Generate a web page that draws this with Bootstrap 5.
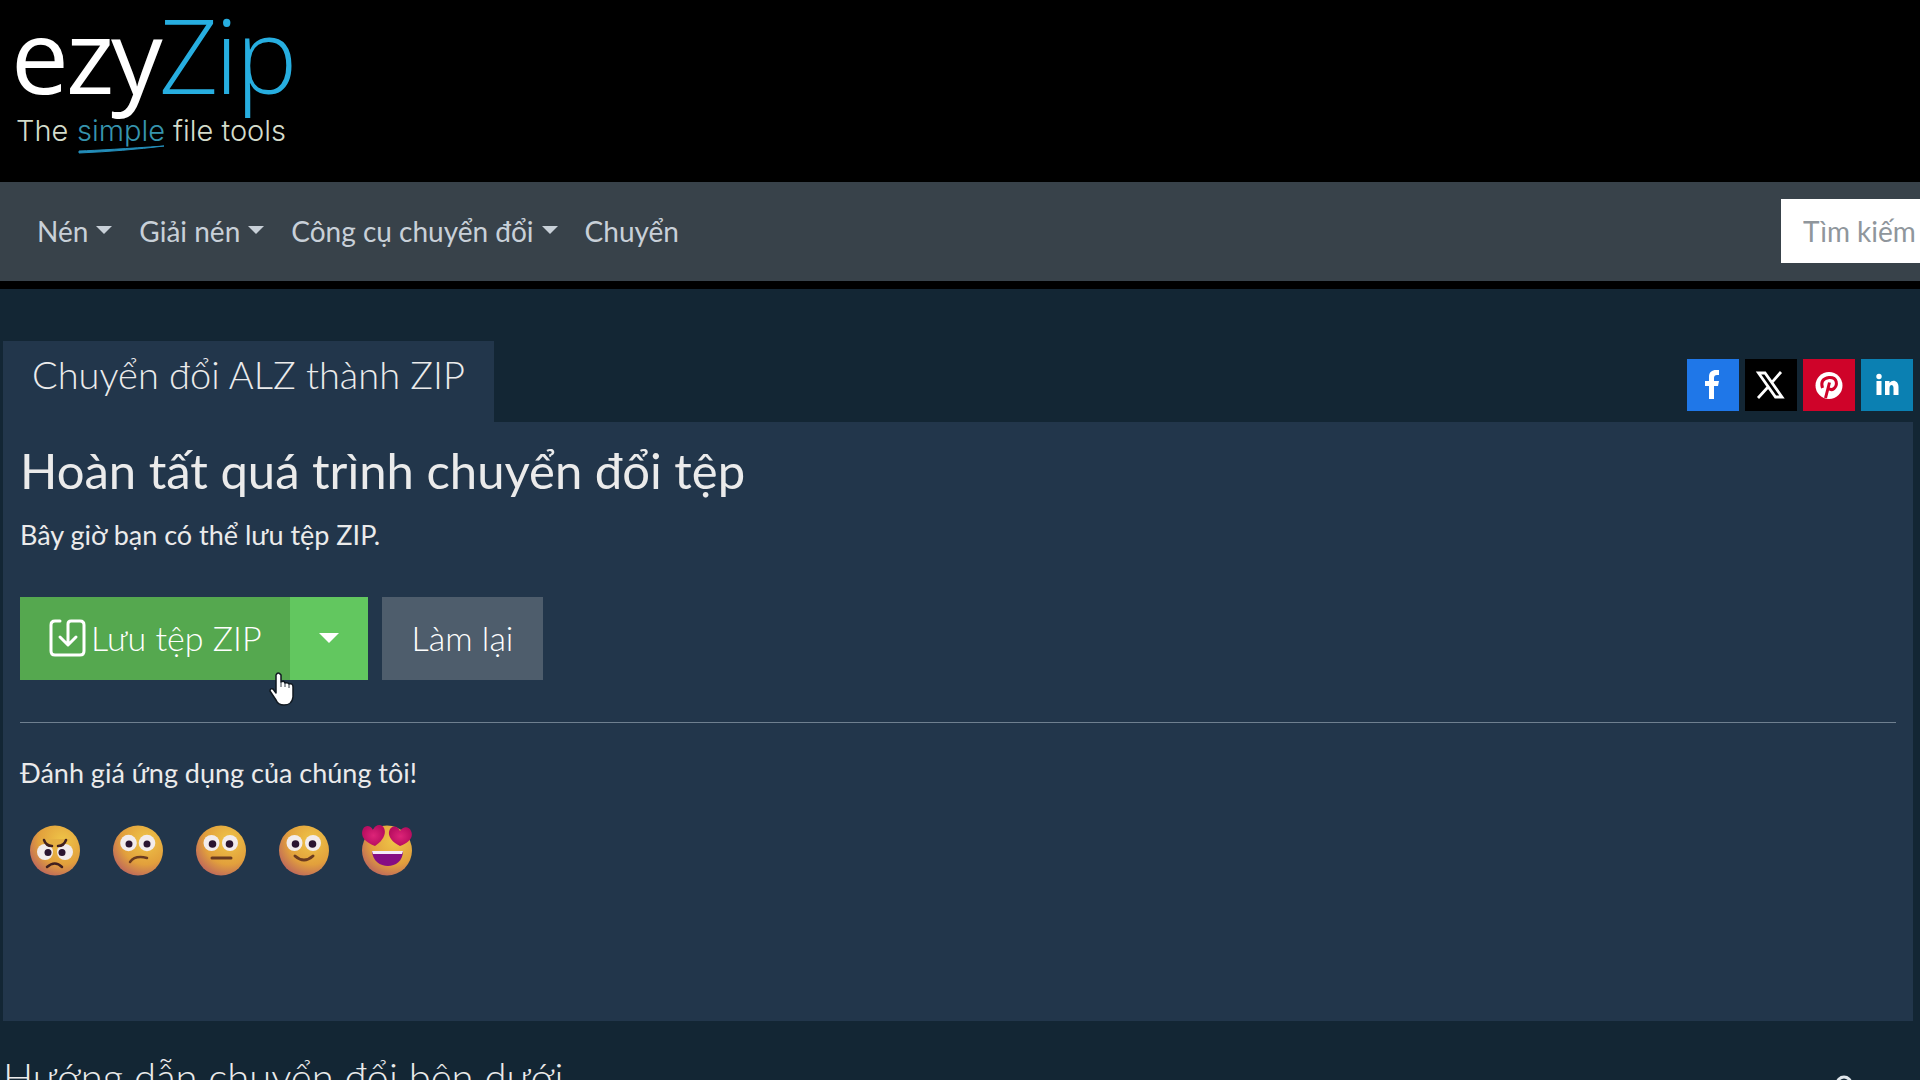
<!DOCTYPE html>
<html lang="vi">
<head>
<meta charset="utf-8">
<meta name="viewport" content="width=device-width, initial-scale=1">
<title>ezyZip</title>
<link href="https://cdn.jsdelivr.net/npm/bootstrap@5.3.0/dist/css/bootstrap.min.css" rel="stylesheet">
<style>
body{background:#132634;color:#ebebeb;font-family:Lato,"Noto Sans",sans-serif;font-size:28px;line-height:40px;height:100vh;overflow:hidden}
.masthead{background:#000;height:182px;padding:0 16px}
.brand{display:inline-block}
.brand svg{display:block}
.wordmark{font-family:"Open Sans","Noto Sans",sans-serif;font-size:103px}
.tagline{font-family:Inter,"Liberation Sans",sans-serif;font-size:29px;font-weight:300}
.mainbar{background:#38424a;border-bottom:8px solid #000;height:107px;padding:0 0 1px 37px}
.mainbar .navbar-nav .nav-link{color:#c8d0d8;padding:0;line-height:40px}
.mainbar .navbar-nav{gap:27px}
.mainbar .dropdown-toggle::after,.save-more::after{vertical-align:8px;border-top:8px solid;border-left:8px solid transparent;border-right:8px solid transparent;margin-left:8px}
.finder{width:139px;height:64px;border:0;border-radius:0;padding:0 0 0 22px;font-size:28px;background:#fff}
.finder::placeholder{color:#8f969c;opacity:1}
.workspace{padding:52px 7px 0 3px}
.tool-tab{background:#22364b;height:81px;padding:11px 29px 0;font-size:38px;font-weight:300;line-height:44px;margin:0}
.share{gap:6px;padding-bottom:11px}
.share a{width:52px;height:52px;display:flex}
.share svg{width:52px;height:52px}
.fb{background:#1f77e8}.xx{background:#000}.pin{background:#cf0329}.lin{background:#0b80b2}
.panel{background:#22364b;min-height:599px;padding:18px 17px}
.panel h2{font-size:49px;font-weight:400;line-height:60px;margin:0 0 15px}
.panel p{margin:0;font-size:27px}
.actions{gap:14px;margin-top:42px}
.actions .btn{border:0;border-radius:0;height:83px;font-size:34px;font-weight:300;line-height:44px;padding:0 30px 2px;color:#fff}
.actions .save{background:#55a84f;padding:0 29px 2px}
.actions .save-more{background:#62c75f;width:78px;padding:0}
.actions .save-more::after{margin:0;border-width:10px 10px 0;vertical-align:9px}
.actions .redo{background:#4e5d6c}
.panel hr{border-color:#6f8090;opacity:1;margin:42px 0 30px;border-top-width:1px}
.faces{gap:33px;margin:32px 0 0 10px}
.faces button{border:0;padding:0;background:none;width:50px;height:51px;display:flex}
.pointer{position:absolute;left:269px;top:671px;width:25px;height:36px}
.guide{padding:28px 64px 0 3px}
.guide h2{font-size:40px;font-weight:300;line-height:56px;margin:0}
.guide svg{margin-top:26px}
</style>
<script src="https://cdn.jsdelivr.net/npm/bootstrap@5.3.0/dist/js/bootstrap.bundle.min.js"></script>
</head>
<body>
<header class="masthead">
<a class="brand" href="#" aria-label="ezyZip">
<svg width="290" height="160" viewBox="0 0 290 160">
<g class="wordmark"><g fill="#fff"><text x="-5" y="94">e</text><text x="50" y="94">z</text><text x="95" y="94">y</text></g>
<g fill="#27aee0" font-weight="300"><text x="143" y="94">Z</text><text x="199" y="94">i</text><text x="220" y="94">p</text></g></g>
<g class="tagline" fill="#d4dccb"><text x="0" y="141">The</text><text x="61" y="141" fill="#3694ae">simple</text><text x="157" y="141">file tools</text></g>
<path d="M63 151q28-1 85-5q-40 5-85 7z" fill="#238db9" stroke="#238db9"/>
</svg></a>
</header>
<nav class="mainbar navbar navbar-expand flex-nowrap">
<ul class="navbar-nav">
<li class="nav-item dropdown"><a class="nav-link dropdown-toggle" href="#" data-bs-toggle="dropdown">Nén</a></li>
<li class="nav-item dropdown"><a class="nav-link dropdown-toggle" href="#" data-bs-toggle="dropdown">Giải nén</a></li>
<li class="nav-item dropdown"><a class="nav-link dropdown-toggle" href="#" data-bs-toggle="dropdown">Công cụ chuyển đổi</a></li>
<li class="nav-item"><a class="nav-link" href="#">Chuyển</a></li>
</ul>
<form class="ms-auto d-flex"><input class="finder form-control" type="text" placeholder="Tìm kiếm" aria-label="Tìm kiếm"></form>
</nav>
<main class="workspace">
<div class="d-flex justify-content-between align-items-end">
<h1 class="tool-tab">Chuyển đổi ALZ thành ZIP</h1>
<div class="share d-flex">
<a class="fb" href="#" aria-label="Facebook"><svg viewBox="0 0 52 52"><path fill="#fff" d="M22 40V27h-4v-5h4v-4c0-5 3-7 7-7h3v5h-2q-3 0-3 3v3h5l-1 5h-4v13z"/></svg></a>
<a class="xx" href="#" aria-label="X"><svg viewBox="0 0 52 52"><path fill="none" stroke="#fff" stroke-width="2.800" d="M13.500 14h6.500l17 24h-6.500zM36 13 26.500 23.800M23.500 27.500 13 39"/></svg></a>
<a class="pin" href="#" aria-label="Pinterest"><svg viewBox="0 0 52 52"><circle cx="26" cy="26.500" r="13.500" fill="#fff"/><path fill="none" stroke="#cf0329" stroke-width="3" d="M19.500 29q-3-9 6.500-10.500c9-.5 8.500 8 5 11q-3 2.500-6-.5M26.500 23.500 22.500 39"/></svg></a>
<a class="lin" href="#" aria-label="LinkedIn"><svg viewBox="0 0 52 52" fill="#fff"><circle cx="18" cy="17.500" r="2.700"/><path d="M15.500 22h5v14h-5zM24 22h4.500v2c3-4 9-2.500 9 4v8h-5v-7c0-4-4-4-4 0v7H24z"/></svg></a>
</div></div>
<section class="panel">
<h2>Hoàn tất quá trình chuyển đổi tệp</h2>
<p>Bây giờ bạn có thể lưu tệp ZIP.</p>
<div class="actions d-flex">
<div class="btn-group">
<button class="btn save d-flex align-items-center" type="button"><svg width="38" height="40" viewBox="0 0 38 40" fill="none" stroke="#fff" stroke-width="3" stroke-linecap="round" stroke-linejoin="round"><path d="M11 3H6Q2 3 2 7v26q0 4 4 4h25q4 0 4-4V7q0-4-4-4H22q-3 0-3 3v20M11 19l8 8 8-8"/></svg><span class="ps-1">Lưu tệp ZIP</span></button>
<button class="btn save-more dropdown-toggle" type="button" data-bs-toggle="dropdown" aria-label="Tùy chọn lưu"></button>
</div>
<button class="btn redo" type="button">Làm lại</button>
</div>
<hr>
<p>Đánh giá ứng dụng của chúng tôi!</p>
<svg width="0" height="0" class="position-absolute"><defs>
<radialGradient id="skin" cx=".65" cy=".3" r=".8"><stop offset="0" stop-color="#efc548"/><stop offset=".6" stop-color="#e2a03c"/><stop offset="1" stop-color="#b9605f"/></radialGradient>
<radialGradient id="heart"><stop offset="0" stop-color="#dd2478"/><stop offset="1" stop-color="#b80e60"/></radialGradient></defs></svg>
<div class="faces d-flex">
<button type="button" aria-label="Rất tệ"><svg width="50" height="51" viewBox="0 0 50 51"><circle cx="25" cy="25.500" r="25" fill="url(#skin)"/><g fill="#f2ecec"><circle cx="15" cy="27" r="8"/><circle cx="35" cy="27" r="8"/></g><path d="M10 14h30l-9 8H19z" fill="#e5b043"/><g fill="#2a1430"><circle cx="18" cy="27.500" r="3.500"/><circle cx="32" cy="27.500" r="3.500"/></g><path d="M14 15q2 6 8 6M36 15q-2 6-8 6M17 42q8-7 15 0" fill="none" stroke="#402020" stroke-width="2.500" stroke-linecap="round"/></svg></button>
<button type="button" aria-label="Tệ"><svg width="50" height="51" viewBox="0 0 50 51"><circle cx="25" cy="25.500" r="25" fill="url(#skin)"/><g fill="#f2ecec"><circle cx="15.500" cy="18" r="8.300"/><circle cx="34" cy="18" r="8.300"/></g><g fill="#2a1430"><circle cx="16" cy="19" r="3.500"/><circle cx="34" cy="19" r="3.500"/></g><path d="M17 37q5-7 17-4" fill="none" stroke="#6b3b20" stroke-width="2.500" stroke-linecap="round"/></svg></button>
<button type="button" aria-label="Bình thường"><svg width="50" height="51" viewBox="0 0 50 51"><circle cx="25" cy="25.500" r="25" fill="url(#skin)"/><g fill="#f2ecec"><circle cx="15.500" cy="18" r="8"/><circle cx="34" cy="18" r="8"/></g><g fill="#2a1430"><circle cx="16.500" cy="19" r="3.800"/><circle cx="33.500" cy="19" r="3.800"/></g><path d="M16 33h19" stroke="#6b3b20" stroke-width="3" stroke-linecap="round"/></svg></button>
<button type="button" aria-label="Tốt"><svg width="50" height="51" viewBox="0 0 50 51"><circle cx="25" cy="25.500" r="25" fill="url(#skin)"/><g fill="#f2ecec"><circle cx="15.500" cy="18" r="8"/><circle cx="34" cy="18" r="8"/></g><g fill="#2a1430"><circle cx="16.500" cy="19" r="3.800"/><circle cx="33.500" cy="19" r="3.800"/></g><path d="M16 31q9 8 18 0" fill="none" stroke="#6b3b20" stroke-width="3" stroke-linecap="round"/></svg></button>
<button type="button" aria-label="Tuyệt vời"><svg width="50" height="51" viewBox="0 0 50 51"><circle cx="25" cy="25.500" r="25" fill="url(#skin)"/><path d="M10 26h31c0 20-30 20-31 0z" fill="#850d84"/><path d="M10 26h31l-1 3H11z" fill="#f4eafa"/><g fill="url(#heart)"><path d="M13 21C2 17-2 10 1 4c3-5 8-3 10 1 2-5 8-7 11-2 3 6-2 14-9 18z"/><path d="M38 21c-10-5-13-12-10-17 3-4 8-3 10 2 3-5 9-5 11 0 3 6-2 12-11 15z"/></g></svg></button>
</div>
</section>
</main>
<section class="guide d-flex justify-content-between align-items-start"><h2>Hướng dẫn chuyển đổi bên dưới</h2>
<svg width="24" height="24" viewBox="0 0 24 24" fill="none" stroke="#dfe5ea" stroke-width="3"><circle cx="12" cy="9" r="7"/></svg></section>
<svg class="pointer" viewBox="0 0 25 36"><path fill="#fff" stroke="#101820" stroke-width="1.500" stroke-linejoin="round" d="M7 22V4q2-4 5 0v7q3-2 4 1 3-1 4 1 4-1 4 3v10q-1 8-9 8-6 0-8-5L1 20q0-3 3-2z"/><path d="M12 11v5M16 12v4M20 13v4" stroke="#333b44"/></svg>
</body>
</html>
